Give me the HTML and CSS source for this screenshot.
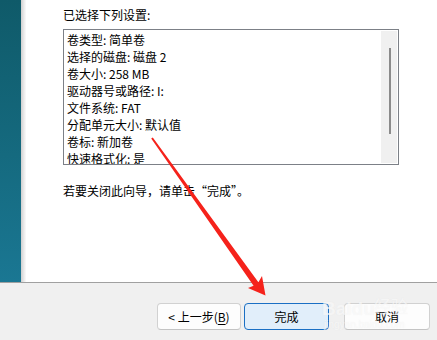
FILE: index.html
```html
<!DOCTYPE html>
<html lang="zh-CN">
<head>
<meta charset="utf-8">
<title>新建简单卷向导</title>
<link rel="stylesheet" href="styles.css">
</head>
<body>
<div class="wizard">
  <div class="main">
    <div class="sidebar"></div>
    <div class="shade"></div>
    <div class="content">
      <p class="label">已选择下列设置:</p>
      <div class="listbox">
        <ul class="items">
          <li>卷类型: 简单卷</li>
          <li>选择的磁盘: 磁盘 2</li>
          <li>卷大小: 258 MB</li>
          <li>驱动器号或路径: I:</li>
          <li>文件系统: FAT</li>
          <li>分配单元大小: 默认值</li>
          <li>卷标: 新加卷</li>
          <li>快速格式化: 是</li>
        </ul>
        <div class="scrollbar"><div class="thumb"></div></div>
      </div>
      <p class="hint">若要关闭此向导，请单击“完成”。</p>
    </div>
  </div>
  <div class="footer">
    <button class="btn btn-back">&lt; 上一步(<u>B</u>)</button>
    <button class="btn btn-default">完成</button>
    <button class="btn btn-cancel">取消</button>
  </div>
</div>
<div class="watermark">
  <span class="wm-baidu">Bai<span class="wm-du">du</span></span><span class="wm-jy">经验</span>
  <span class="wm-url">jingyan.baidu.com</span>
</div>
<svg class="arrow" width="437" height="340" viewBox="0 0 437 340" aria-hidden="true">
  <polygon fill="#f5221b" points="152.8,137.4 258.4,282.3 262,276 265.5,295.5 248,288 253.6,285.7 151.2,138.6"/>
</svg>
</body>
</html>
```
FILE: styles.css
```css
* { box-sizing: border-box; }
html, body { margin: 0; padding: 0; }
body {
  width: 437px;
  height: 340px;
  overflow: hidden;
  position: relative;
  background: #ffffff;
  font-family: "Noto Sans CJK SC", "Noto Sans", sans-serif;
  font-size: 12px;
  color: #000;
}
.wizard {
  display: flex;
  flex-direction: column;
  height: 340px;
}
.main {
  display: flex;
  height: 282px;
}
.sidebar {
  width: 21px;
  background: linear-gradient(to bottom, #0f5a69 0%, #156a7f 55%, #1a7793 100%);
}
.shade {
  width: 5px;
  background: linear-gradient(to right, #cfcfcf, #e6e6e6 50%, #f7f7f7 90%, #ffffff);
}
.content {
  flex: 1;
  padding-left: 37px;
  padding-top: 6px;
}
.label {
  margin: 0;
  line-height: 17px;
}
.listbox {
  margin-top: 6px;
  width: 336px;
  height: 136px;
  border: 1px solid #7c8087;
  display: flex;
  overflow: hidden;
}
.items {
  list-style: none;
  margin: 0;
  padding: 1px 0 0 3px;
  flex: 1;
  line-height: 17px;
  white-space: nowrap;
}
.scrollbar {
  width: 16px;
  margin: 1px 1px 1px 0;
  background: #f0f0f0;
  display: flex;
  justify-content: center;
  padding-top: 17px;
}
.thumb {
  width: 2px;
  height: 86px;
  background: #8b8b8b;
  margin-left: 1px;
}
.hint {
  margin: 17px 0 0;
  line-height: 17px;
}
.footer {
  height: 58px;
  border-top: 1px solid #a0a0a0;
  background: #f0f0f0;
  display: flex;
  justify-content: flex-end;
  align-items: flex-start;
  padding: 20px 7px 0 0;
}
.btn {
  height: 27px;
  font-family: inherit;
  font-size: 12px;
  color: #000;
  background: #fdfdfd;
  border: 1px solid #d1d1d1;
  border-bottom-color: #c4c4c4;
  border-radius: 4px;
  padding: 0;
  line-height: 25px;
}
.btn-back { width: 84px; margin-right: 3px; }
.btn-default {
  width: 85px;
  margin-right: 15px;
  background: #e1eefa;
  border-color: #1a6fc4;
}
.btn-cancel { width: 86px; }
.btn u { text-underline-offset: 2px; }
.watermark {
  position: absolute;
  left: 322px;
  top: 286px;
  width: 100px;
  height: 44px;
  color: rgba(255, 255, 255, 0.6);
  pointer-events: none;
}
.wm-baidu {
  position: absolute;
  left: 0;
  top: 13px;
  font-family: "Liberation Sans", sans-serif;
  font-size: 19px;
  font-weight: bold;
  line-height: 20px;
  text-shadow: 0 0 1px rgba(210, 210, 210, 0.3);
}
.wm-jy {
  position: absolute;
  left: 52px;
  top: 10px;
  font-size: 17px;
  line-height: 20px;
  text-shadow: 0 0 1px rgba(210, 210, 210, 0.3);
}
.wm-url {
  position: absolute;
  left: 2px;
  top: 33px;
  font-family: "Liberation Sans", sans-serif;
  font-size: 10px;
  line-height: 11px;
  text-shadow: 0 0 1px rgba(210, 210, 210, 0.3);
}
.arrow {
  position: absolute;
  left: 0;
  top: 0;
  pointer-events: none;
}
```
